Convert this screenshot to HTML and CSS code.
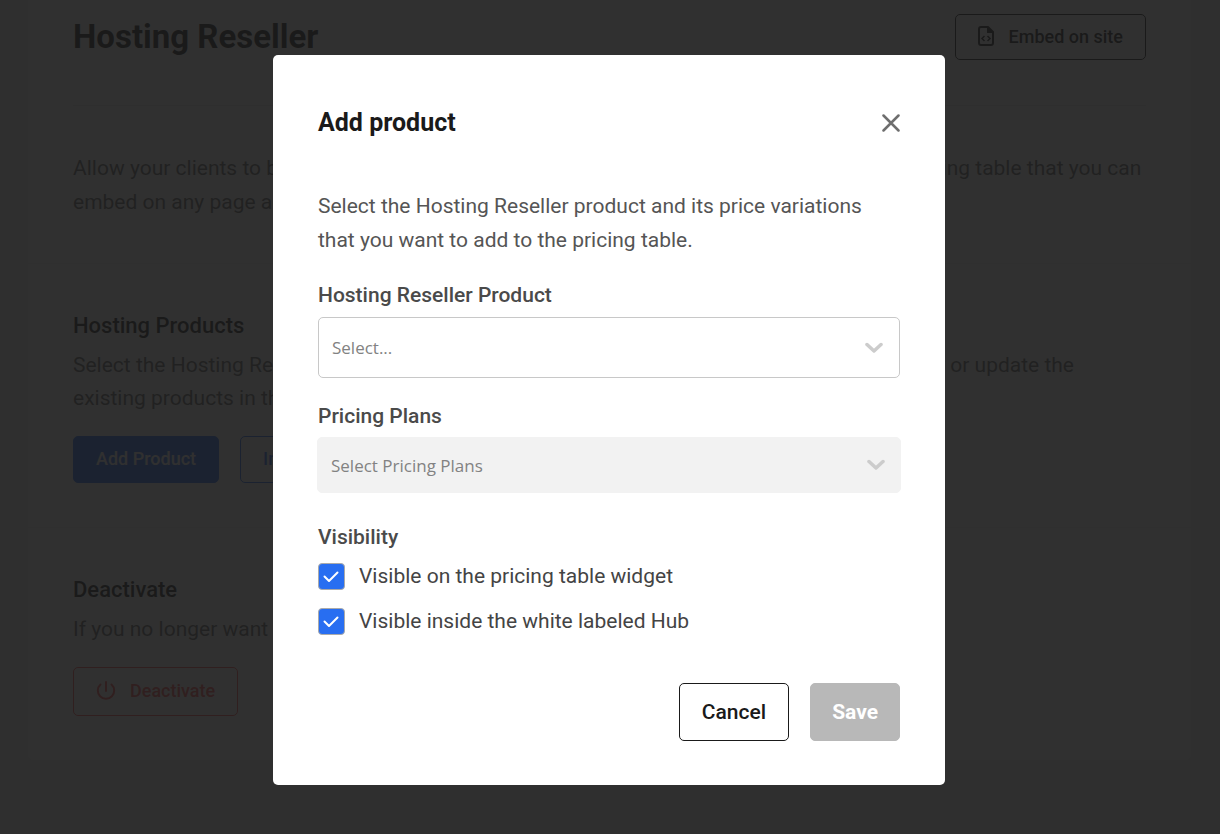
FILE: index.html
```html
<!DOCTYPE html>
<html lang="en">
<head>
<meta charset="utf-8">
<title>Hosting Reseller</title>
<link rel="stylesheet" href="styles.css">
</head>
<body>
<main class="page">
  <div class="card">
    <header class="card-header">
      <h1 class="page-title">Hosting Reseller</h1>
      <button class="btn btn-outline" type="button">
        <svg viewBox="0 0 16 20" width="16" height="20" fill="none" stroke="currentColor" stroke-width="2" aria-hidden="true">
          <path d="M3 1h7l5 5v11a2 2 0 0 1-2 2H3a2 2 0 0 1-2-2V3a2 2 0 0 1 2-2z"/>
          <path d="M9 1v6h6V6l-5-5z" fill="currentColor" stroke="none"/>
          <path d="M6.500 10L4 12.500L6.500 15M9.500 10L12 12.500L9.500 15" stroke-width="1.500"/>
        </svg>
        Embed on site
      </button>
    </header>
    <p class="intro">Allow your clients to buy hosting directly from your own website by creating a new simple pricing table that you can<br>embed on any page across your sites.</p>
    <section class="section">
      <h2 class="section-title">Hosting Products</h2>
      <p class="section-text">Select the Hosting Reseller products that you want to include in the table, <a class="link" href="#">import them directly</a> or update the<br>existing products in the pricing table.</p>
      <div class="actions">
        <button class="btn btn-primary" type="button">Add Product</button>
        <button class="btn btn-blue" type="button">Import Products</button>
      </div>
    </section>
    <section class="section">
      <h2 class="section-title">Deactivate</h2>
      <p class="section-text">If you no longer want to use this feature, you can deactivate it.</p>
      <div class="actions">
        <button class="btn btn-red" type="button">
          <svg viewBox="0 0 20 20" width="20" height="20" fill="none" stroke="currentColor" stroke-width="2" stroke-linecap="round" aria-hidden="true">
            <path d="M10 1v9M4.500 3.500a8.200 8.200 0 1 0 11 0"/>
          </svg>
          Deactivate
        </button>
      </div>
    </section>
  </div>
</main>
<div class="overlay">
  <form class="modal" role="dialog" aria-modal="true" aria-labelledby="modal-title">
    <header class="modal-header">
      <h2 class="modal-title" id="modal-title">Add product</h2>
      <button class="close" type="button" aria-label="Close">
        <svg viewBox="0 0 18 18" width="18" height="18" fill="none" stroke="currentColor" stroke-width="2.500" stroke-linecap="round" aria-hidden="true"><path d="M1.500 1.500l15 15M16.500 1.500l-15 15"/></svg>
      </button>
    </header>
    <p class="modal-text">Select the Hosting Reseller product and its price variations that you want to add to the pricing table.</p>
    <div class="field">
      <label class="label" for="product">Hosting Reseller Product</label>
      <div class="select-wrap">
        <select class="select" id="product"><option>Select...</option></select>
        <svg class="chevron" viewBox="0 0 18 12" width="18" height="12" fill="none" stroke="currentColor" stroke-width="3.500" stroke-linecap="round" stroke-linejoin="round" aria-hidden="true"><path d="M2 2.500l7 6.500 7-6.500"/></svg>
      </div>
    </div>
    <div class="field">
      <label class="label" for="plans">Pricing Plans</label>
      <div class="select-wrap select-wrap-disabled">
        <select class="select" id="plans" disabled><option>Select Pricing Plans</option></select>
        <svg class="chevron" viewBox="0 0 18 12" width="18" height="12" fill="none" stroke="currentColor" stroke-width="3.500" stroke-linecap="round" stroke-linejoin="round" aria-hidden="true"><path d="M2 2.500l7 6.500 7-6.500"/></svg>
      </div>
    </div>
    <fieldset class="visibility">
      <legend class="label">Visibility</legend>
      <label class="check">
        <span class="check-box">
          <input class="check-input" type="checkbox" checked>
          <svg class="check-mark" viewBox="0 0 27 27" width="27" height="27" fill="none" stroke="#fff" stroke-width="2" stroke-linecap="round" stroke-linejoin="round" aria-hidden="true"><path d="M6.500 13.500L11 18l8.500-8.500"/></svg>
        </span>
        Visible on the pricing table widget
      </label>
      <label class="check">
        <span class="check-box">
          <input class="check-input" type="checkbox" checked>
          <svg class="check-mark" viewBox="0 0 27 27" width="27" height="27" fill="none" stroke="#fff" stroke-width="2" stroke-linecap="round" stroke-linejoin="round" aria-hidden="true"><path d="M6.500 13.500L11 18l8.500-8.500"/></svg>
        </span>
        Visible inside the white labeled Hub
      </label>
    </fieldset>
    <footer class="modal-footer">
      <button class="btn-lg btn-cancel" type="button">Cancel</button>
      <button class="btn-lg btn-save" type="submit" disabled>Save</button>
    </footer>
  </form>
</div>
</body>
</html>
```
FILE: styles.css
```css
* { box-sizing: border-box; }
body {
  margin: 0;
  background: #f2f2f2;
  font-family: Roboto, "Liberation Sans", sans-serif;
  font-size: 21px;
  color: #666;
  overflow: hidden;
}
h1, h2, p { margin: 0; }
button, select { font-family: inherit; }

.page { padding: 0 29px 73px 28px; }
.card { background: #fff; border-radius: 0 0 6px 6px; }
.card-header {
  display: flex;
  align-items: center;
  justify-content: space-between;
  margin: 0 45px;
  padding: 14px 0 45px;
  border-bottom: 1px solid #e6e6e6;
}
.page-title { font-size: 33px; line-height: 46px; font-weight: 700; color: #1a1a1a; }
.intro { padding: 45px 45px 44px; line-height: 34px; white-space: nowrap; }
.section { padding: 45px 45px 44px; border-top: 1px solid #f2f2f2; }
.section-title { font-size: 22px; line-height: 34px; font-weight: 500; color: #1a1a1a; }
.section-text { margin-top: 6px; line-height: 33px; white-space: nowrap; }
.link { color: #286efa; text-decoration: none; }
.actions { display: flex; gap: 21px; margin-top: 21px; }
.btn {
  display: flex;
  align-items: center;
  gap: 14px;
  height: 47px;
  padding: 0 22px 2px;
  border: 1px solid;
  border-radius: 5px;
  background: none;
  font-size: 18px;
  font-weight: 500;
}
.btn-outline { gap: 15px; height: 46px; color: #1a1a1a; }
.btn-primary { background: #286efa; border-color: #286efa; color: #fff; }
.btn-blue { color: #286efa; }
.btn-red { height: 49px; color: #ff4d4d; }

.overlay {
  position: fixed;
  inset: 0;
  display: flex;
  align-items: flex-start;
  justify-content: center;
  padding: 55px 2px 0 0;
  background: rgba(26, 26, 26, 0.904);
}
.modal {
  width: 672px;
  max-width: 100%;
  padding: 51px 45px 44px;
  border-radius: 5px;
  background: #fff;
}
.modal-header { display: flex; align-items: center; justify-content: space-between; }
.modal-title { font-size: 25px; line-height: 34px; font-weight: 700; color: #1a1a1a; }
.close { display: flex; padding: 0; border: 0; background: none; color: #6e6e6e; }
.modal-text { margin-top: 49px; line-height: 34px; color: #555; }
.field { margin-top: 23px; }
.label { display: block; padding: 0; font-size: 21px; line-height: 30px; font-weight: 500; color: #4a4a4a; }
.select-wrap { position: relative; margin-top: 7px; }
.select {
  display: block;
  width: 100%;
  height: 61px;
  padding: 0 48px 0 13px;
  border: 1px solid #c8c8c8;
  border-radius: 5px;
  background: #fff;
  appearance: none;
  font-family: "Open Sans", "Noto Sans", sans-serif;
  font-size: 17px;
  color: #828282;
  opacity: 1;
}
.chevron { position: absolute; right: 17px; top: 25px; color: #ccc; pointer-events: none; }
.select-wrap-disabled { margin: 6px -1px 0; }
.select-wrap-disabled .select { height: 56px; border-color: #f2f2f2; background: #f2f2f2; }
.select-wrap-disabled .chevron { right: 16px; top: 22px; }
.visibility { display: flex; flex-direction: column; gap: 18px; margin: 29px 0 0; padding: 0; border: 0; }
.visibility .label { margin-bottom: 11px; }
.check { display: flex; align-items: center; gap: 14px; line-height: 27px; color: #444; }
.check-box { position: relative; display: flex; }
.check-input {
  width: 27px;
  height: 27px;
  margin: 0;
  border: 1px solid #aaa;
  border-radius: 4px;
  appearance: none;
}
.check-input:checked { background: #286ef1; }
.check-mark { position: absolute; inset: 0; pointer-events: none; }
.modal-footer { display: flex; justify-content: flex-end; gap: 21px; margin-top: 48px; }
.btn-lg {
  height: 58px;
  padding: 0 22px;
  border: 1px solid;
  border-radius: 5px;
  font-size: 21px;
}
.btn-cancel { border-color: #1a1a1a; background: #fff; font-weight: 500; color: #1a1a1a; }
.btn-save { padding: 0 21px; border-color: #b8b8b8; background: #b8b8b8; font-weight: 700; color: #fff; }
```
